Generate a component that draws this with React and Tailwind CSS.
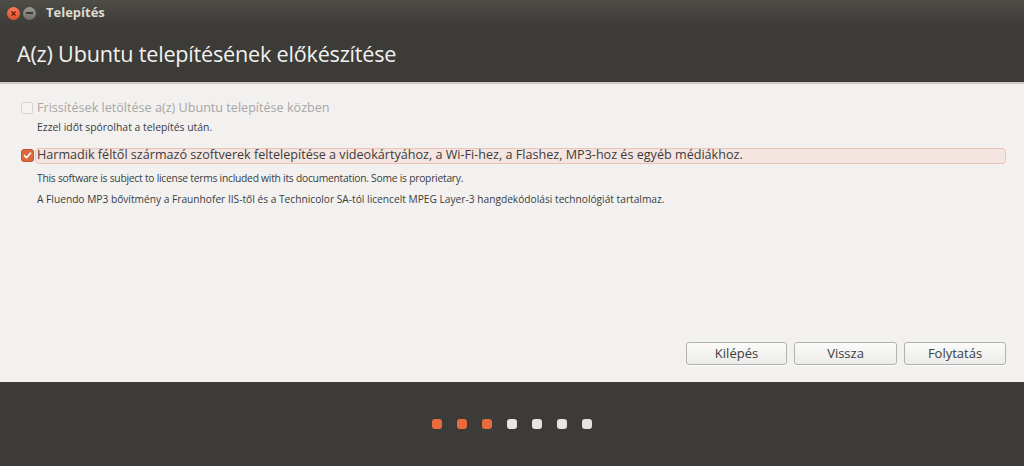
import React from "react";

const font = { fontFamily: '"Open Sans", "DejaVu Sans", sans-serif' };

function Check() {
  return (
    <div className="w-[13px] h-[13px] rounded-[3px] bg-[#dd6a3c] border border-[#c2532a] flex items-center justify-center shrink-0">
      <svg width="9" height="9" viewBox="0 0 9 9">
        <path d="M1.5 4.6 L3.6 6.7 L7.6 2" stroke="#fff" strokeWidth="1.6" fill="none" strokeLinecap="round" strokeLinejoin="round" />
      </svg>
    </div>
  );
}

function Btn({ children }) {
  return (
    <div className="h-[23px] rounded-[3px] border border-[#b4b2ae] bg-gradient-to-b from-[#fbfbfa] to-[#ecebe9] flex items-center justify-center text-[13px] text-[#3c3c3c] shadow-[0_1px_0_rgba(255,255,255,0.8)]">
      {children}
    </div>
  );
}

export default function App() {
  const dots = ["o", "o", "o", "w", "w", "w", "w"];
  return (
    <div className="w-[1024px] h-[466px] flex flex-col bg-[#f2f1f0] overflow-hidden" style={font}>
      {/* title bar */}
      <div className="h-[26px] bg-gradient-to-b from-[#4d4c47] to-[#3c3b37] flex items-center pl-[7px]">
        <div className="w-[13px] h-[13px] rounded-full bg-gradient-to-b from-[#f47a55] to-[#e0502c] flex items-center justify-center">
          <svg width="7" height="7" viewBox="0 0 7 7"><path d="M1.5 1.5 L5.5 5.5 M5.5 1.5 L1.5 5.5" stroke="#6b1d0c" strokeWidth="1.3" /></svg>
        </div>
        <div className="w-[13px] h-[13px] rounded-full bg-gradient-to-b from-[#9a9993] to-[#6f6e69] ml-[3px] flex items-center justify-center">
          <div className="w-[7px] h-[1.5px] bg-[#3c3b37]" />
        </div>
        <div className="ml-[10px] text-[13px] font-bold text-[#dfdbd2]">Telepítés</div>
      </div>
      {/* header */}
      <div className="h-[56px] bg-[#3c3b37] flex items-center pl-[17px]">
        <div className="text-[21.6px] text-[#f2f1f0] tracking-[-0.2px] leading-none">A(z) Ubuntu telepítésének előkészítése</div>
      </div>
      <div className="h-[2px] bg-[#cfcdc9]" />
      {/* content */}
      <div className="flex-1 flex flex-col pl-[21px] pr-[18px]">
        <div className="mt-[16px] flex items-center gap-[4px] h-[16px]">
          <div className="w-[12px] h-[12px] rounded-[2px] border border-[#d6d4d0] bg-[#f4f3f2]" />
          <div className="text-[12.6px] text-[#a8a6a3]">Frissítések letöltése a(z) Ubuntu telepítése közben</div>
        </div>
        <div className="ml-[16px] mt-[4px] text-[10.4px] text-[#3c3c3c]">Ezzel időt spórolhat a telepítés után.</div>
        <div className="mt-[12px] flex items-center gap-[1px] h-[16px]">
          <Check />
          <div className="flex-1 h-[16px] rounded-[4px] border border-[#edc3b5] bg-[#f5e5e0] flex items-center pl-[1px]">
            <span className="text-[12.6px] text-[#3c3c3c]">Harmadik féltől származó szoftverek feltelepítése a videokártyához, a Wi-Fi-hez, a Flashez, MP3-hoz és egyéb médiákhoz.</span>
          </div>
        </div>
        <div className="ml-[16px] mt-[7px] text-[10.3px] tracking-[-0.25px] text-[#3c3c3c]">This software is subject to license terms included with its documentation. Some is proprietary.</div>
        <div className="ml-[16px] mt-[6px] text-[10.2px] text-[#3c3c3c]">A Fluendo MP3 bővítmény a Fraunhofer IIS-től és a Technicolor SA-tól licencelt MPEG Layer-3 hangdekódolási technológiát tartalmaz.</div>
        <div className="flex-1" />
        <div className="grid grid-cols-[101px_103px_102px] gap-[7px] justify-end mb-[17px]">
          <Btn>Kilépés</Btn>
          <Btn>Vissza</Btn>
          <Btn>Folytatás</Btn>
        </div>
      </div>
      {/* footer */}
      <div className="h-[84px] bg-[#3c3b37] flex items-center justify-center">
        <div className="flex gap-[15px]">
          {dots.map((d, i) => (
            <div key={i} className={"w-[10px] h-[10px] rounded-[3px] " + (d === "o" ? "bg-[#ea6a3c]" : "bg-[#e6e5e3]")} />
          ))}
        </div>
      </div>
    </div>
  );
}
